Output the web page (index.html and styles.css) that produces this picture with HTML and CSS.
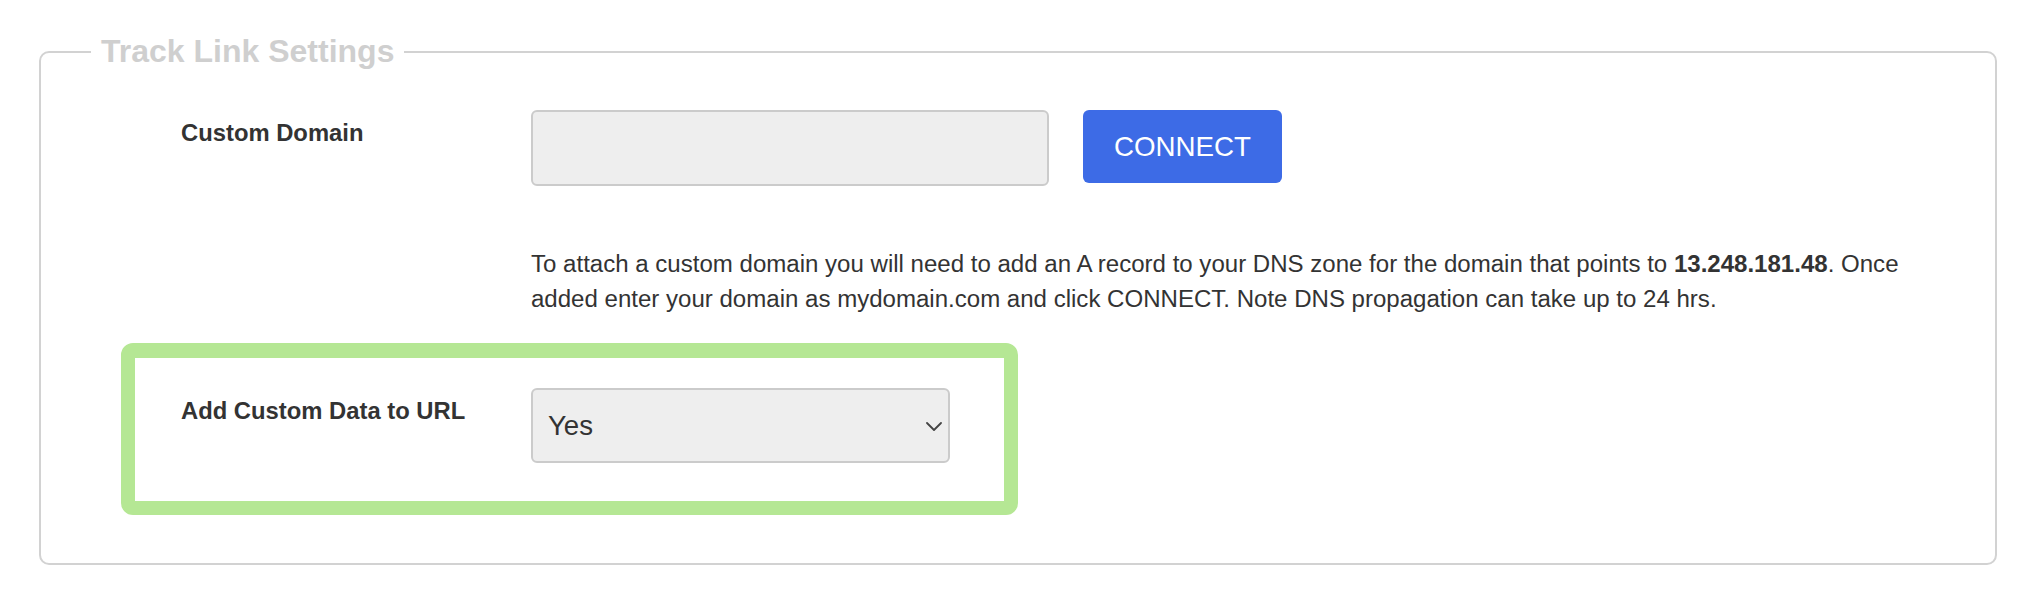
FILE: index.html
```html
<!DOCTYPE html>
<html lang="en">
<head>
<meta charset="utf-8">
<title>Track Link Settings</title>
<link rel="stylesheet" href="styles.css">
</head>
<body>
<fieldset class="panel">
  <legend class="panel-title">Track Link Settings</legend>
  <div class="panel-body">
    <div class="form-row row-domain">
      <label class="field-label" for="domain">Custom Domain</label>
      <div class="field-control">
        <div class="input-group">
          <input id="domain" class="text-input" type="text">
          <button class="btn-connect" type="button">CONNECT</button>
        </div>
        <p class="help-text">To attach a custom domain you will need to add an A record to your DNS zone for the domain that points to <strong>13.248.181.48</strong>. Once added enter your domain as mydomain.com and click CONNECT. Note DNS propagation can take up to 24 hrs.</p>
      </div>
    </div>
    <div class="highlight">
      <div class="form-row">
        <label class="field-label" for="customdata">Add Custom Data to URL</label>
        <div class="select-wrap">
          <select id="customdata" class="select-input">
            <option>Yes</option>
            <option>No</option>
          </select>
          <svg class="chevron" width="16" height="9" viewBox="0 0 16 9" aria-hidden="true"><path d="M1 1 L8 8 L15 1" fill="none" stroke="#444" stroke-width="1.8" stroke-linecap="round" stroke-linejoin="round"/></svg>
        </div>
      </div>
    </div>
  </div>
</fieldset>
</body>
</html>
```
FILE: styles.css
```css
* { box-sizing: border-box; }

body {
  margin: 0;
  background: #ffffff;
  font-family: "Liberation Sans", Arial, Helvetica, sans-serif;
  color: #333333;
  font-size: 23.8px;
  line-height: 35px;
}

.panel {
  margin: 33px 41px 0 39px;
  padding: 0;
  border: 2px solid #d2d2d2;
  border-radius: 10px;
  min-width: 0;
}

.panel-title {
  margin-left: 50px;
  padding: 0 10px;
  font-size: 32px;
  font-weight: bold;
  line-height: normal;
  color: #cfcfcf;
}

.panel-body {
  padding: 40px 60px 48px 80px;
}

.form-row {
  display: grid;
  grid-template-columns: 350px 1fr;
  align-items: start;
}

.row-domain {
  padding-left: 60px;
}

.field-label {
  padding-top: 5px;
  font-weight: bold;
  color: #333333;
}

.input-group {
  display: flex;
  align-items: flex-start;
  gap: 34px;
}

.text-input {
  width: 518px;
  height: 76px;
  background: #eeeeee;
  border: 2px solid #cbcbcb;
  border-radius: 6px;
  font-family: inherit;
  font-size: 27px;
  padding: 0 15px;
  color: #333333;
}

.btn-connect {
  width: 199px;
  height: 73px;
  background: #3d6be6;
  color: #ffffff;
  border: none;
  border-radius: 6px;
  font-family: inherit;
  font-size: 27.7px;
  padding: 0;
}

.help-text {
  margin: 60px 0 0 0;
  font-size: 24.05px;
}

.help-text strong {
  font-weight: bold;
}

.highlight {
  width: 897px;
  margin-top: 27px;
  border: 14px solid #b5e794;
  border-top-width: 15px;
  border-radius: 12px;
  padding: 30px 0 38px 46px;
}

.select-wrap {
  position: relative;
  width: 419px;
}

.select-input {
  display: block;
  width: 419px;
  height: 75px;
  -webkit-appearance: none;
  appearance: none;
  background: #eeeeee;
  border: 2px solid #cbcbcb;
  border-radius: 6px;
  font-family: inherit;
  font-size: 27.6px;
  color: #333333;
  padding: 0 40px 0 15px;
}

.chevron {
  position: absolute;
  right: 8px;
  top: 34px;
  pointer-events: none;
}
```
